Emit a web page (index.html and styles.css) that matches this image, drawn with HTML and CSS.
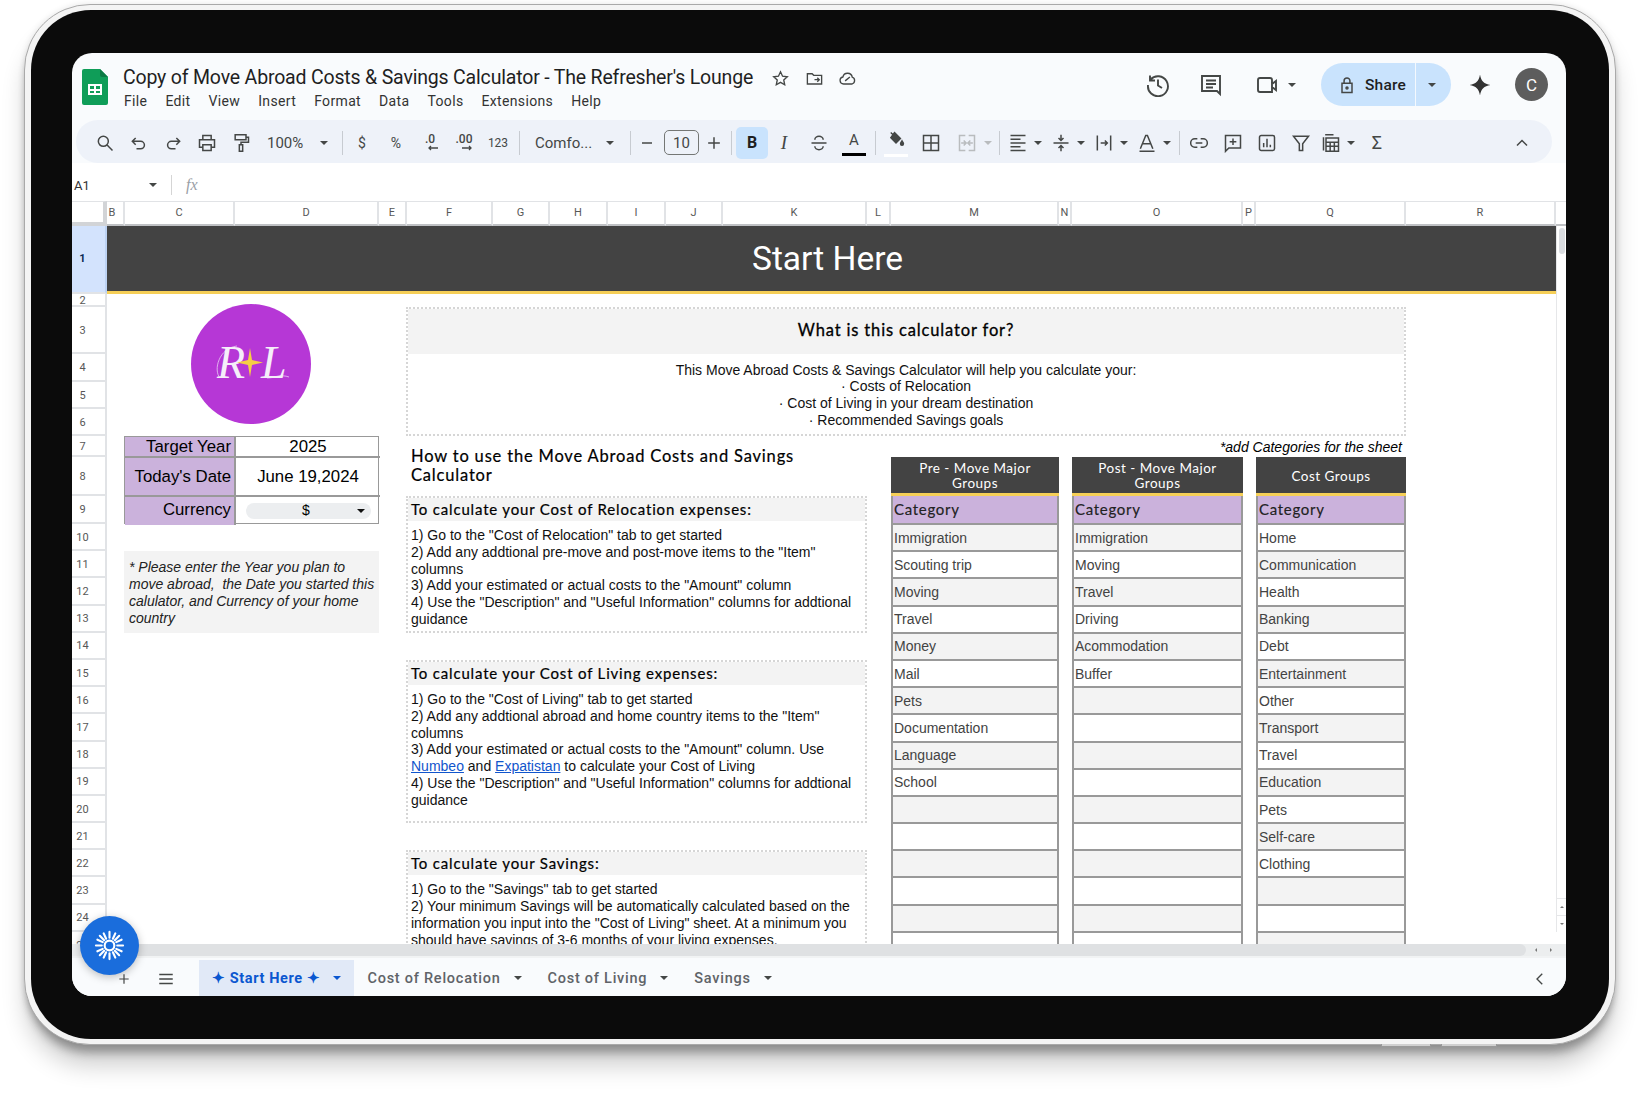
FILE: index.html
```html
<!DOCTYPE html>
<html lang="en">
<head>
<meta charset="utf-8">
<title>Move Abroad Costs &amp; Savings Calculator</title>
<link rel="stylesheet" href="styles.css">
</head>
<body>
<div class="device">
  <div class="bezel">
    <main class="screen">
      <header class="appbar">
        <svg class="sheets-logo" viewBox="0 0 26 36"><path d="M2 0h16l8 8v26a2 2 0 0 1-2 2H2a2 2 0 0 1-2-2V2a2 2 0 0 1 2-2z" fill="#0f9d58"/><path d="M18 0l8 8h-6a2 2 0 0 1-2-2z" fill="#0b7a44"/><path d="M6 15h14v11H6zM8 17v3h4v-3zM14 17v3h4v-3zM8 22v2h4v-2zM14 22v2h4v-2z" fill="#fff" fill-rule="evenodd"/></svg>
        <div class="titleblock">
          <div class="titlerow">
            <h1 class="doc-title">Copy of Move Abroad Costs &amp; Savings Calculator - The Refresher's Lounge</h1>
            <svg class="ic title-ic" viewBox="0 0 24 24"><path d="M12 3.500l2.600 5.600 6 .7-4.500 4.100 1.200 6-5.300-3-5.300 3 1.200-6-4.500-4.100 6-.7z"/></svg>
            <svg class="ic title-ic" viewBox="0 0 24 24"><path d="M3 6h6l2 2h10v11H3zM12 13.500h6M15.500 11l2.500 2.500-2.500 2.500"/></svg>
            <svg class="ic title-ic" viewBox="0 0 24 24"><path d="M7 19a4.500 4.500 0 0 1-.8-8.900A6 6 0 0 1 18 10.400a4.500 4.500 0 0 1-.5 8.600zM9 15l6-5"/></svg>
          </div>
          <nav class="menu"><span>File</span><span>Edit</span><span>View</span><span>Insert</span><span>Format</span><span>Data</span><span>Tools</span><span>Extensions</span><span>Help</span></nav>
        </div>
        <div class="actions">
          <svg class="ic act-ic history" viewBox="0 0 24 24"><path d="M4.500 6.500A10 10 0 1 1 2 12M4 2.500v5h5M12 6.500V12.500l4 2.500"/></svg>
          <svg class="ic act-ic comment" viewBox="0 0 24 24"><path d="M3 3h18v18l-3-3H3zM7 7.500h10M7 11h10M7 14.500h7"/></svg>
          <svg class="ic act-ic meet" viewBox="0 0 24 24"><path d="M3 7a2 2 0 0 1 2-2h10a2 2 0 0 1 2 2v12H5a2 2 0 0 1-2-2zM17 11l4-3v9l-4-3"/></svg>
          <i class="caret meet-caret"></i>
          <div class="share">
            <span class="share-main"><svg class="ic lock" viewBox="0 0 24 24"><path d="M6 10h12v11H6zM8.500 10V7a3.500 3.500 0 0 1 7 0v3"/><circle cx="12" cy="15.500" r="1.200"/></svg>Share</span>
            <span class="share-drop"><i class="caret"></i></span>
          </div>
          <svg class="gem" viewBox="0 0 24 24"><path d="M12 1.500C13 8 16 11 22.500 12 16 13 13 16 12 22.500 11 16 8 13 1.500 12 8 11 11 8 12 1.500z"/></svg>
          <div class="avatar">C</div>
        </div>
      </header>

      <div class="toolbar">
        <span class="tb"><svg class="ic" viewBox="0 0 24 24"><circle cx="10" cy="10" r="6"/><path d="M14.500 14.500L21 21"/></svg></span>
        <span class="tb"><svg class="ic" viewBox="0 0 24 24"><path d="M8 6L4 10l4 4M4 10h10a4.500 4.500 0 0 1 0 9H9"/></svg></span>
        <span class="tb"><svg class="ic" viewBox="0 0 24 24"><path d="M16 6l4 4-4 4M20 10H10a4.500 4.500 0 0 0 0 9h5"/></svg></span>
        <span class="tb"><svg class="ic" viewBox="0 0 24 24"><path d="M7 8V3h10v5M7 17H3V8h18v9h-4M7 14h10v7H7z"/></svg></span>
        <span class="tb"><svg class="ic" viewBox="0 0 24 24"><path d="M5 2h13v6H5zM18 5h3v6h-9v3M10 14h4v8h-4z"/></svg></span>
        <span class="tb-zoom">100%<i class="caret"></i></span>
        <i class="sep sep-zoom"></i>
        <span class="tb txt">$</span>
        <span class="tb txt">%</span>
        <span class="tb dec">.0<svg class="dec-arrow" viewBox="0 0 12 6"><path d="M11 3H2M4 1L2 3l2 2"/></svg></span>
        <span class="tb dec">.00<svg class="dec-arrow" viewBox="0 0 12 6"><path d="M1 3h9M8 1l2 2-2 2"/></svg></span>
        <span class="tb txt small">123</span>
        <i class="sep sep-num"></i>
        <span class="tb-font">Comfo...<i class="caret"></i></span>
        <i class="sep sep-font"></i>
        <span class="tb tb-minus"><svg class="ic" viewBox="0 0 24 24"><path d="M6 12h12"/></svg></span>
        <span class="size-box">10</span>
        <span class="tb tb-plus"><svg class="ic" viewBox="0 0 24 24"><path d="M5 12h14M12 5v14"/></svg></span>
        <i class="sep sep-size"></i>
        <span class="tb bold">B</span>
        <span class="tb tb-i">I</span>
        <span class="tb tb-s"><svg class="ic" viewBox="0 0 24 24"><path d="M3 12h18M7 8a5 4 0 0 1 10 0M17 16a5 4 0 0 1-10 0"/></svg></span>
        <span class="tb tb-a">A<i class="colorbar"></i></span>
        <i class="sep sep-a"></i>
        <span class="tb tb-fill"><svg class="ic fill-ic" viewBox="0 0 24 24"><path d="M10 2l8 8-6 6-7-7zM8 5L5 2M20 13c-1 2-2 3-2 4a2 2 0 0 0 4 0c0-1-1-2-2-4z"/></svg><i class="fillbar"></i></span>
        <span class="tb tb-w36"><svg class="ic" viewBox="0 0 24 24"><path d="M3 3h18v18H3zM12 3v18M3 12h18"/></svg></span>
        <span class="tb tb-w36 off"><svg class="ic" viewBox="0 0 24 24"><path d="M10 3H3v18h7M14 3h7v18h-7M5 12h5M8 9l3 3-3 3M19 12h-5M16 9l-3 3 3 3"/></svg></span>
        <i class="caret off-caret"></i>
        <i class="sep sep-merge"></i>
        <span class="tb-group"><svg class="ic" viewBox="0 0 24 24"><path d="M3 3h18M3 7.500h12M3 12h18M3 16.500h12M3 21h18"/></svg><i class="caret"></i></span>
        <span class="tb-group"><svg class="ic" viewBox="0 0 24 24"><path d="M3 12h18M12 2v7M9 6l3 3 3-3M12 22v-7M9 18l3-3 3 3"/></svg><i class="caret"></i></span>
        <span class="tb-group"><svg class="ic" viewBox="0 0 24 24"><path d="M4 3v18M8 12h8M13 9l3 3-3 3M20 3v18"/></svg><i class="caret"></i></span>
        <span class="tb-group"><svg class="ic" viewBox="0 0 24 24"><path d="M4 19L10.500 3h2L19 19M7 13h9M3 22h18"/></svg><i class="caret"></i></span>
        <i class="sep sep-rotate"></i>
        <span class="tb"><svg class="ic" viewBox="0 0 24 24"><path d="M10 7H7a5 5 0 0 0 0 10h3M14 7h3a5 5 0 0 1 0 10h-3M8 12h8"/></svg></span>
        <span class="tb"><svg class="ic" viewBox="0 0 24 24"><path d="M3 3h18v15H7l-4 4zM12 6.500v8M8 10.500h8"/></svg></span>
        <span class="tb"><svg class="ic" viewBox="0 0 24 24"><path d="M5 3h14a2 2 0 0 1 2 2v14a2 2 0 0 1-2 2H5a2 2 0 0 1-2-2V5a2 2 0 0 1 2-2zM8 17v-5M12 17V7M16 17v-3"/></svg></span>
        <span class="tb"><svg class="ic" viewBox="0 0 24 24"><path d="M3 4h18l-7 9v8h-4v-8z"/></svg></span>
        <span class="tb-calc"><svg class="ic" viewBox="0 0 24 24"><path d="M5 2h10M3 5v16M6 6h15v16H6zM6 11h15M11 11v11M16 11v11M6 16h15"/></svg><i class="caret"></i></span>
        <span class="tb txt sigma">Σ</span>
        <span class="tb tb-collapse"><svg class="ic" viewBox="0 0 24 24"><path d="M6 15l6-6 6 6"/></svg></span>
      </div>

      <div class="formula">
        <span class="cell-name">A1</span><i class="caret"></i><i class="formula-sep"></i><span class="fx">fx</span>
      </div>

      <section class="sheet">
        <div class="corner"></div>
        <div class="ch ch-b">B</div><div class="ch">C</div><div class="ch">D</div><div class="ch">E</div><div class="ch">F</div><div class="ch">G</div><div class="ch">H</div><div class="ch">I</div><div class="ch">J</div><div class="ch">K</div><div class="ch">L</div><div class="ch">M</div><div class="ch">N</div><div class="ch">O</div><div class="ch">P</div><div class="ch">Q</div><div class="ch">R</div><div class="ch ch-end"></div>

        <div class="rh rh-on">1</div><div class="rh">2</div><div class="rh">3</div><div class="rh">4</div><div class="rh">5</div><div class="rh">6</div><div class="rh">7</div><div class="rh">8</div><div class="rh">9</div><div class="rh">10</div><div class="rh">11</div><div class="rh">12</div><div class="rh">13</div><div class="rh">14</div><div class="rh">15</div><div class="rh">16</div><div class="rh">17</div><div class="rh">18</div><div class="rh">19</div><div class="rh">20</div><div class="rh">21</div><div class="rh">22</div><div class="rh">23</div><div class="rh">24</div><div class="rh">25</div>

        <div class="banner">Start Here</div>

        <div class="logo-wrap">
          <svg class="logo" viewBox="0 0 120 120">
            <circle cx="60" cy="60" r="60" fill="#b637d6"/>
            <path class="logo-swash" d="M29 74C22 66 28 44 46 42M76 74c8 0 14-4 22-1"/>
            <text x="26" y="74" class="logo-letter">R</text>
            <text x="70" y="74" class="logo-letter">L</text>
            <path d="M59 44l2 12 11 2.500-11 2.500-2 12-2-12-11-2.500 11-2.500z" fill="#f5cf45"/>
          </svg>
        </div>

        <div class="kv">
          <div class="kv-label">Target Year</div><div class="kv-value">2025</div>
          <div class="kv-label">Today's Date</div><div class="kv-value">June 19,2024</div>
          <div class="kv-label">Currency</div>
          <div class="kv-value"><div class="chip"><span>$</span><i class="caret caret-dark"></i></div></div>
        </div>

        <div class="note">* Please enter the Year you plan to<br>move abroad,&nbsp; the Date you started this<br>calulator, and Currency of your home<br>country</div>

        <article class="box box-what">
          <h2 class="what-head">What is this calculator for?</h2>
          <p class="what-body">This Move Abroad Costs &amp; Savings Calculator will help you calculate your:<br>· Costs of Relocation<br>· Cost of Living in your dream destination<br>· Recommended Savings goals</p>
        </article>

        <h2 class="howto">How to use the Move Abroad Costs and Savings<br>Calculator</h2>

        <article class="box box-1">
          <h3 class="box-head">To calculate your Cost of Relocation expenses:</h3>
          <p class="box-body">1) Go to the "Cost of Relocation" tab to get started<br>2) Add any addtional pre-move and post-move items to the "Item"<br>columns<br>3) Add your estimated or actual costs to the "Amount" column<br>4) Use the "Description" and "Useful Information" columns for addtional<br>guidance</p>
        </article>

        <article class="box box-2">
          <h3 class="box-head">To calculate your Cost of Living expenses:</h3>
          <p class="box-body">1) Go to the "Cost of Living" tab to get started<br>2) Add any addtional abroad and home country items to the "Item"<br>columns<br>3) Add your estimated or actual costs to the "Amount" column. Use<br><a href="#">Numbeo</a> and <a href="#">Expatistan</a> to calculate your Cost of Living<br>4) Use the "Description" and "Useful Information" columns for addtional<br>guidance</p>
        </article>

        <article class="box box-3">
          <h3 class="box-head">To calculate your Savings:</h3>
          <p class="box-body">1) Go to the "Savings" tab to get started<br>2) Your minimum Savings will be automatically calculated based on the<br>information you input into the "Cost of Living" sheet. At a minimum you<br>should have savings of 3-6 months of your living expenses.</p>
        </article>

        <div class="addcat">*add Categories for the sheet</div>

        <div class="cats cats-m">
          <div class="cats-head">Pre - Move Major<br>Groups</div>
          <div class="cats-title">Category</div>
          <div>Immigration</div><div>Scouting trip</div><div>Moving</div><div>Travel</div><div>Money</div><div>Mail</div><div>Pets</div><div>Documentation</div><div>Language</div><div>School</div><div></div><div></div><div></div><div></div><div></div><div></div>
        </div>
        <div class="cats cats-o">
          <div class="cats-head">Post - Move Major<br>Groups</div>
          <div class="cats-title">Category</div>
          <div>Immigration</div><div>Moving</div><div>Travel</div><div>Driving</div><div>Acommodation</div><div>Buffer</div><div></div><div></div><div></div><div></div><div></div><div></div><div></div><div></div><div></div><div></div>
        </div>
        <div class="cats cats-q">
          <div class="cats-head">Cost Groups</div>
          <div class="cats-title">Category</div>
          <div>Home</div><div>Communication</div><div>Health</div><div>Banking</div><div>Debt</div><div>Entertainment</div><div>Other</div><div>Transport</div><div>Travel</div><div>Education</div><div>Pets</div><div>Self-care</div><div>Clothing</div><div></div><div></div><div></div>
        </div>

        <div class="vscroll"><i class="vthumb"></i><i class="vbtn"><b class="tri-up"></b></i><i class="vbtn"><b class="tri-down"></b></i></div>
      </section>

      <div class="hscroll"><i class="hthumb"></i><b class="tri-left"></b><b class="tri-right"></b></div>

      <footer class="tabs">
        <svg class="ic tab-plus" viewBox="0 0 24 24"><path d="M5 12h14M12 5v14"/></svg>
        <svg class="ic tab-list" viewBox="0 0 24 24"><path d="M3 6h18M3 12h18M3 18h18"/></svg>
        <div class="tab tab-on"><span>✦ Start Here ✦</span><i class="caret"></i></div>
        <div class="tab"><span>Cost of Relocation</span><i class="caret"></i></div>
        <div class="tab"><span>Cost of Living</span><i class="caret"></i></div>
        <div class="tab"><span>Savings</span><i class="caret"></i></div>
        <svg class="ic tab-chev" viewBox="0 0 24 24"><path d="M15 5l-7 7 7 7"/></svg>
      </footer>

      <button class="fab" aria-label="Extension">
        <svg viewBox="0 0 32 32"><path d="M16 2v6M16 24v6M2 16h6M24 16h6M6 6l4.500 4.500M21.500 21.500L26 26M26 6l-4.500 4.500M10.500 21.500L6 26M10 3.500l2.500 5.500M22 28.500L19.500 23M22 3.500L19.500 9M10 28.500l2.500-5.500M3.500 10L9 12.500M28.500 22L23 19.500M28.500 10L23 12.500M3.500 22L9 19.500"/><circle cx="16" cy="16" r="5"/></svg>
      </button>
    </main>
  </div>
  <i class="side-btn side-btn-a"></i>
  <i class="side-btn side-btn-b"></i>
</div>
</body>
</html>
```

FILE: styles.css
```css
* { box-sizing: border-box; }
html, body { margin: 0; padding: 0; background: #fff; }
body { width: 1640px; height: 1100px; overflow: hidden; font-family: "Liberation Sans", Arial, sans-serif; color: #000; }
h1, h2, h3, p { margin: 0; font-weight: normal; }
i { display: block; font-style: normal; }

/* device */
.device {
  position: relative;
  width: 1592px; height: 1041px;
  margin: 4px 0 0 24px;
  padding: 5px 6px 5px 6px;
  background: #f4f4f4;
  border: 1px solid #a9a9a9;
  border-radius: 66px;
  box-shadow: 0 11px 8px -3px rgba(0,0,0,.28), 0 22px 24px -2px rgba(0,0,0,.2), 0 0 6px rgba(0,0,0,.1);
}
.bezel {
  height: 100%;
  padding: 43px 43px 43px 41px;
  background: #0b0b0b;
  border-radius: 60px;
}
.screen {
  position: relative;
  display: flex; flex-direction: column;
  width: 1494px; height: 943px;
  background: #f9fbfd;
  border-radius: 20px;
  overflow: hidden;
}
.side-btn { position: absolute; top: 100%; width: 50px; height: 3px; background: #d0d0d0; border: 1px solid #999; border-top: 0; }
.side-btn-a { left: 1356px; }
.side-btn-b { left: 1416px; width: 56px; }

/* generic */
.ic { width: 20px; height: 20px; fill: none; stroke: #444746; stroke-width: 1.8; flex: none; }
.caret { width: 0; height: 0; border: 4px solid transparent; border-top-color: #444746; border-bottom: 0; flex: none; }
.caret-dark { border-top-color: #111; }

/* app bar */
.appbar { display: flex; height: 67px; flex: none; font-family: Roboto, sans-serif; color: #1f1f1f; }
.sheets-logo { width: 26px; height: 36px; margin: 16px 0 0 10px; flex: none; }
.titleblock { margin-left: 15px; padding-top: 13px; }
.titlerow { display: flex; align-items: center; height: 24px; }
.doc-title { font-size: 19.500px; line-height: 24px; white-space: nowrap; letter-spacing: -.18px; }
.title-ic { width: 19px; height: 19px; margin-left: 14.500px; stroke-width: 1.7; }
.title-ic:first-of-type { margin-left: 18px; }
.menu { display: flex; gap: 18px; margin-top: 2px; font-size: 14px; line-height: 18px; color: #333; padding-left: 1px; letter-spacing: .35px; }
.actions { display: flex; align-items: center; height: 43px; margin: 10px 18px 0 auto; }
.act-ic { width: 24px; height: 24px; stroke-width: 1.9; }
.comment { margin-left: 29px; }
.meet { margin-left: 32px; }
.meet-caret { margin-left: 9px; }
.share { display: flex; width: 130px; height: 43px; margin-left: 25px; background: #c9e3fd; border-radius: 22px; font-size: 15.500px; font-weight: 500; letter-spacing: .2px; color: #1f1f1f; }
.share-main { display: flex; align-items: center; gap: 8px; width: 95px; padding-left: 16px; border-right: 1px solid #f4f9fe; }
.lock { width: 20px; height: 20px; }
.share-drop { display: flex; align-items: center; justify-content: center; flex: 1; padding-right: 4px; }
.gem { width: 24px; height: 24px; margin-left: 17px; fill: #333; }
.avatar { display: flex; align-items: center; justify-content: center; width: 33px; height: 33px; margin-left: 23px; border-radius: 50%; background: #5d5d5d; color: #fff; font-size: 17px; }

/* toolbar */
.toolbar {
  display: flex; align-items: center;
  flex: none;
  height: 43px; margin: 0 14px 0 4px; padding: 2px 13px 0 12px;
  background: #eef2f9;
  border-radius: 22px;
  font-family: Roboto, sans-serif; font-size: 14px; color: #444746;
}
.tb { display: flex; align-items: center; justify-content: center; position: relative; flex: none; width: 34px; height: 30px; }
.txt { font-size: 14px; }
.small { font-size: 12px; }
.sigma { font-size: 18px; margin-left: 3px; }
.sep { width: 1px; height: 24px; background: #c7cbd1; flex: none; }
.sep-zoom { margin: 0 2px 0 14px; }
.sep-num { margin: 0 15px 0 4px; }
.sep-font { margin: 0 0 0 16px; }
.sep-size { margin: 0 4px 0 2px; }
.sep-a { margin: 0 3px 0 5px; }
.sep-merge { margin: 0 6px 0 7px; }
.sep-rotate { margin: 0 2px 0 1px; }
.tb-zoom { display: flex; align-items: center; justify-content: space-between; width: 70px; padding: 0 0 0 9px; flex: none; font-size: 15px; }
.tb-font { display: flex; align-items: center; justify-content: space-between; width: 79px; flex: none; font-size: 15px; }
.dec { font-size: 12px; flex-direction: column; line-height: 11px; font-weight: 500; }
.dec-arrow { width: 12px; height: 6px; fill: none; stroke: #444746; stroke-width: 1.3; margin-left: 6px; }
.tb-minus { width: 32px; }
.size-box { display: flex; align-items: center; justify-content: center; width: 35px; height: 25px; margin-left: 1px; border: 1.5px solid #747775; border-radius: 5px; flex: none; font-size: 15px; }
.tb-plus { width: 30px; }
.bold { width: 32px; height: 32px; background: #c9e3fd; border-radius: 5px; font-weight: 700; font-size: 16px; color: #1f1f1f; }
.tb-i { width: 32px; font-family: "Liberation Serif", serif; font-style: italic; font-size: 19px; }
.tb-s { width: 38px; }
.tb-a { width: 32px; font-size: 15px; padding-bottom: 5px; }
.colorbar { position: absolute; left: 4px; right: 4px; bottom: 2px; height: 3px; background: #000; }
.tb-fill { flex-direction: column; }
.fill-ic { width: 18px; height: 18px; fill: #444746; margin-bottom: 6px; }
.fillbar { position: absolute; left: 5px; right: 5px; bottom: 1px; height: 3px; background: #fff; }
.tb-w36 { width: 36px; }
.off .ic { stroke: #b9bcbe; }
.off-caret { border-top-color: #b9bcbe; margin-left: -1px; }
.tb-group { display: flex; align-items: center; width: 43px; flex: none; padding-left: 2px; }
.tb-group .caret { margin-left: 6px; }
.tb-calc { display: flex; align-items: center; width: 38px; flex: none; padding-left: 2px; margin-left: 1px; }
.tb-calc .caret { margin-left: 6px; }
.tb-collapse { margin-left: auto; }

/* formula */
.formula { display: flex; align-items: center; flex: none; height: 38px; padding-top: 6px; background: #fff; font-family: Roboto, sans-serif; color: #333; }
.cell-name { width: 77px; padding-left: 2px; font-size: 13px; }
.formula-sep { width: 1px; height: 20px; margin-left: 14px; background: #d5d5d5; }
.fx { margin-left: 14px; font-family: "Liberation Serif", serif; font-style: italic; font-size: 16px; color: #9aa0a6; }

/* sheet */
.sheet {
  display: grid;
  flex: none;
  height: 743px;
  background: #fff;
  overflow: hidden;
  grid-template-columns: 35px 18px 110px 144px 28px 86px 57px 58px 58px 57px 144px 24px 168px 13px 171px 13px 150px 150px 10px;
  grid-template-rows: 25px 68px 13px 47px 28px 27px 27px 21px 39px 28px;
  grid-auto-rows: 27.2px;
  font-size: 14px;
  line-height: 16.8px;
}
.corner { grid-row: 1; background: #fff; border-top: 1px solid #e1e3e6; border-right: 4px solid #d2d4d7; border-bottom: 4px solid #d2d4d7; }
.ch {
  grid-row: 1;
  display: flex; align-items: center; justify-content: center;
  border-top: 1px solid #e1e3e6; border-right: 2px solid #e1e3e6; border-bottom: 2px solid #bfc1c4;
  font-family: Roboto, sans-serif; font-size: 11px; color: #575757;
}
.ch-b { padding-right: 6px; }
.ch-end { border-right: 0; }
.rh {
  grid-column: 1;
  display: flex; align-items: center; justify-content: center;
  padding: 3px 12px 0 0;
  border-right: 2px solid #e1e3e6; border-bottom: 2px solid #e1e3e6;
  font-family: Roboto, sans-serif; font-size: 11px; color: #575757;
}
.rh-on { padding-top: 0; background: #d3e3fd; color: #0b2a55; font-weight: 700; border-right-color: #bcd2f3; }

.banner {
  grid-column: 2 / 19; grid-row: 2;
  display: flex; align-items: center; justify-content: center;
  padding: 1px 8px 0 0;
  background: #434343; color: #fff;
  border-bottom: 3px solid #f6cf57;
  font-family: Roboto, sans-serif; font-size: 33.500px;
}

.logo-wrap { grid-column: 3 / 5; grid-row: 3 / 8; display: flex; align-items: center; justify-content: center; }
.logo { width: 120px; height: 120px; margin: 0 2px 2px 0; }
.logo-letter { font-family: "Liberation Serif", serif; font-style: italic; font-size: 46px; fill: #f5eef9; }
.logo-swash { fill: none; stroke: #e9cdf3; stroke-width: .8; }

.kv {
  grid-column: 3 / 5; grid-row: 8 / 11;
  display: grid;
  margin-left: -1px;
  grid-template-columns: 111px 144px;
  grid-template-rows: 21px 39px 28px;
  border: 1px solid #999;
  font-size: 16.800px;
}
.kv-label, .kv-value { display: flex; align-items: center; padding-top: 2px; border-bottom: 2px solid #999; }
.kv-label { justify-content: flex-end; padding-right: 3px; background: #cbb2dc; border-right: 2px solid #999; }
.kv-value { justify-content: center; }
.kv > :nth-last-child(-n+2) { border-bottom: 0; padding-top: 0; padding-bottom: 1px; }
.chip { display: flex; align-items: center; width: 125px; height: 16px; padding: 0 6px 0 0; background: #eceef0; border-radius: 8px; font-size: 14px; }
.chip span { flex: 1; text-align: center; padding-left: 10px; }

.note {
  grid-column: 3 / 5; grid-row: 12 / 15;
  margin-left: -1px;
  padding: 8px 2px 0 5px;
  background: #f3f3f3;
  font-style: italic;
  color: #222;
  white-space: nowrap;
}

.box { display: flex; flex-direction: column; margin-left: -1px; border: 2px dotted #d6d6d6; min-height: 0; }
.box-what { grid-column: 6 / 18; grid-row: 4 / 8; }
.box-1 { grid-column: 6 / 12; grid-row: 10 / 15; }
.box-2 { grid-column: 6 / 12; grid-row: 16 / 22; }
.box-3 { grid-column: 6 / 12; grid-row: 23 / span 5; border-bottom: 0; }
.what-head {
  display: flex; align-items: center; justify-content: center;
  flex: none; height: 45px; padding-bottom: 2px;
  background: #f3f3f3;
  font-family: Lato, sans-serif; font-size: 16.500px; letter-spacing: .85px; -webkit-text-stroke: .3px #000;
}
.what-body { flex: 1; padding-top: 7.500px; text-align: center; color: #111; }
.howto { grid-column: 6 / 13; grid-row: 8 / 10; padding: 11px 0 0 4px; font-family: Lato, sans-serif; font-size: 16.500px; line-height: 18.700px; letter-spacing: .82px; -webkit-text-stroke: .2px #000; white-space: nowrap; }
.box-head { display: flex; align-items: center; flex: none; height: 23px; margin-bottom: 2px; padding-left: 3px; background: #f3f3f3; font-family: Lato, sans-serif; font-size: 15px; letter-spacing: .82px; -webkit-text-stroke: .2px #000; }
.box-body { padding: 4px 0 0 3px; white-space: nowrap; color: #111; }
.box a { color: #1155cc; text-decoration: underline; }

.addcat { grid-column: 11 / 18; grid-row: 8; display: flex; align-items: center; justify-content: flex-end; padding: 1px 4px 0 0; font-style: italic; }

.cats {
  grid-row: 9 / span 18;
  display: grid;
  grid-template-rows: 39px 29px;
  grid-auto-rows: 27.2px;
  align-self: start;
  border-left: 2px solid #999; border-right: 2px solid #999;
  font-size: 14px; color: #434343;
}
.cats-m { grid-column: 13; }
.cats-o { grid-column: 15; }
.cats-q { grid-column: 17; }
.cats > div { display: flex; align-items: center; padding: 1px 0 0 1px; border-bottom: 2px solid #999; }
.cats > div:nth-child(n+3):nth-child(odd) { background: #f3f3f3; }
.cats-q > div:nth-child(n+3):nth-child(odd) { background: #fff; }
.cats-q > div:nth-child(n+3):nth-child(even) { background: #f3f3f3; }
.cats > .cats-head {
  justify-content: center; text-align: center;
  margin: 0 -2px;
  padding: 2px 0 0;
  background: #434343; color: #fff;
  border-bottom: 3px solid #f6cf57;
  font-family: Lato, sans-serif; font-size: 13.500px; line-height: 14.600px; letter-spacing: .5px;
}
.cats > .cats-title {
  padding: 0 0 1px 1px;
  background: #cbb2dc; color: #222;
  font-family: Lato, sans-serif; font-size: 15px; letter-spacing: .7px; -webkit-text-stroke: .15px #222;
}

.vscroll { grid-column: 19; grid-row: 2 / span 24; display: flex; flex-direction: column; border-left: 1px solid #e6e7e9; background: #fff; }
.vthumb { width: 6px; height: 26px; margin: 2px 0 0 2px; background: #dadce0; border-radius: 3px; }
.vbtn { display: flex; align-items: center; justify-content: center; height: 17px; border-top: 1px solid #e6e7e9; }
.vbtn:nth-child(2) { margin-top: auto; }
.tri-up, .tri-down, .tri-left, .tri-right { display: block; width: 0; height: 0; border: 2.500px solid transparent; }
.tri-up { border-bottom-color: #777; border-top: 0; }
.tri-down { border-top-color: #777; border-bottom: 0; }

.hscroll { display: flex; align-items: center; flex: none; height: 14px; padding-right: 14px; background: #eceeef; border-bottom: 2px solid #f1f3f4; }
.hthumb { flex: 1; height: 12px; margin-left: 35px; margin-right: 9px; background: #dfe1e3; border-radius: 6px; }
.tri-left { border-right-color: #777; border-left: 0; margin-right: 13px; }
.tri-right { border-left-color: #777; border-right: 0; }

.tabs { display: flex; align-items: stretch; flex: 1; padding-left: 44px; background: #f9fbfd; font-family: Roboto, sans-serif; font-size: 14.500px; color: #444746; letter-spacing: .75px; }
.tab-plus { width: 16px; height: 16px; margin-top: 13px; }
.tab-list { width: 18px; height: 18px; margin: 12px 0 0 25px; }
.tab { display: flex; align-items: center; gap: 13px; padding: 2px 13px 0; font-weight: 500; color: #5f6368; }
.tab-on { margin: 2px 0 0 24px; padding-top: 0; background: #e1e9f7; color: #0b57d0; font-weight: 700; letter-spacing: .6px; }
.tab-on .caret { border-top-color: #0b57d0; }
.tab-chev { width: 18px; height: 18px; margin: 12px 17px 0 auto; }

.fab { position: absolute; left: 8px; top: 863px; width: 59px; height: 59px; padding: 14px; border: 0; border-radius: 50%; background: #1a6ddc; box-shadow: 0 2px 8px rgba(0,0,0,.25); }
.fab svg { display: block; width: 31px; height: 31px; fill: none; stroke: #fff; stroke-width: 2.200; stroke-linecap: round; }
```
